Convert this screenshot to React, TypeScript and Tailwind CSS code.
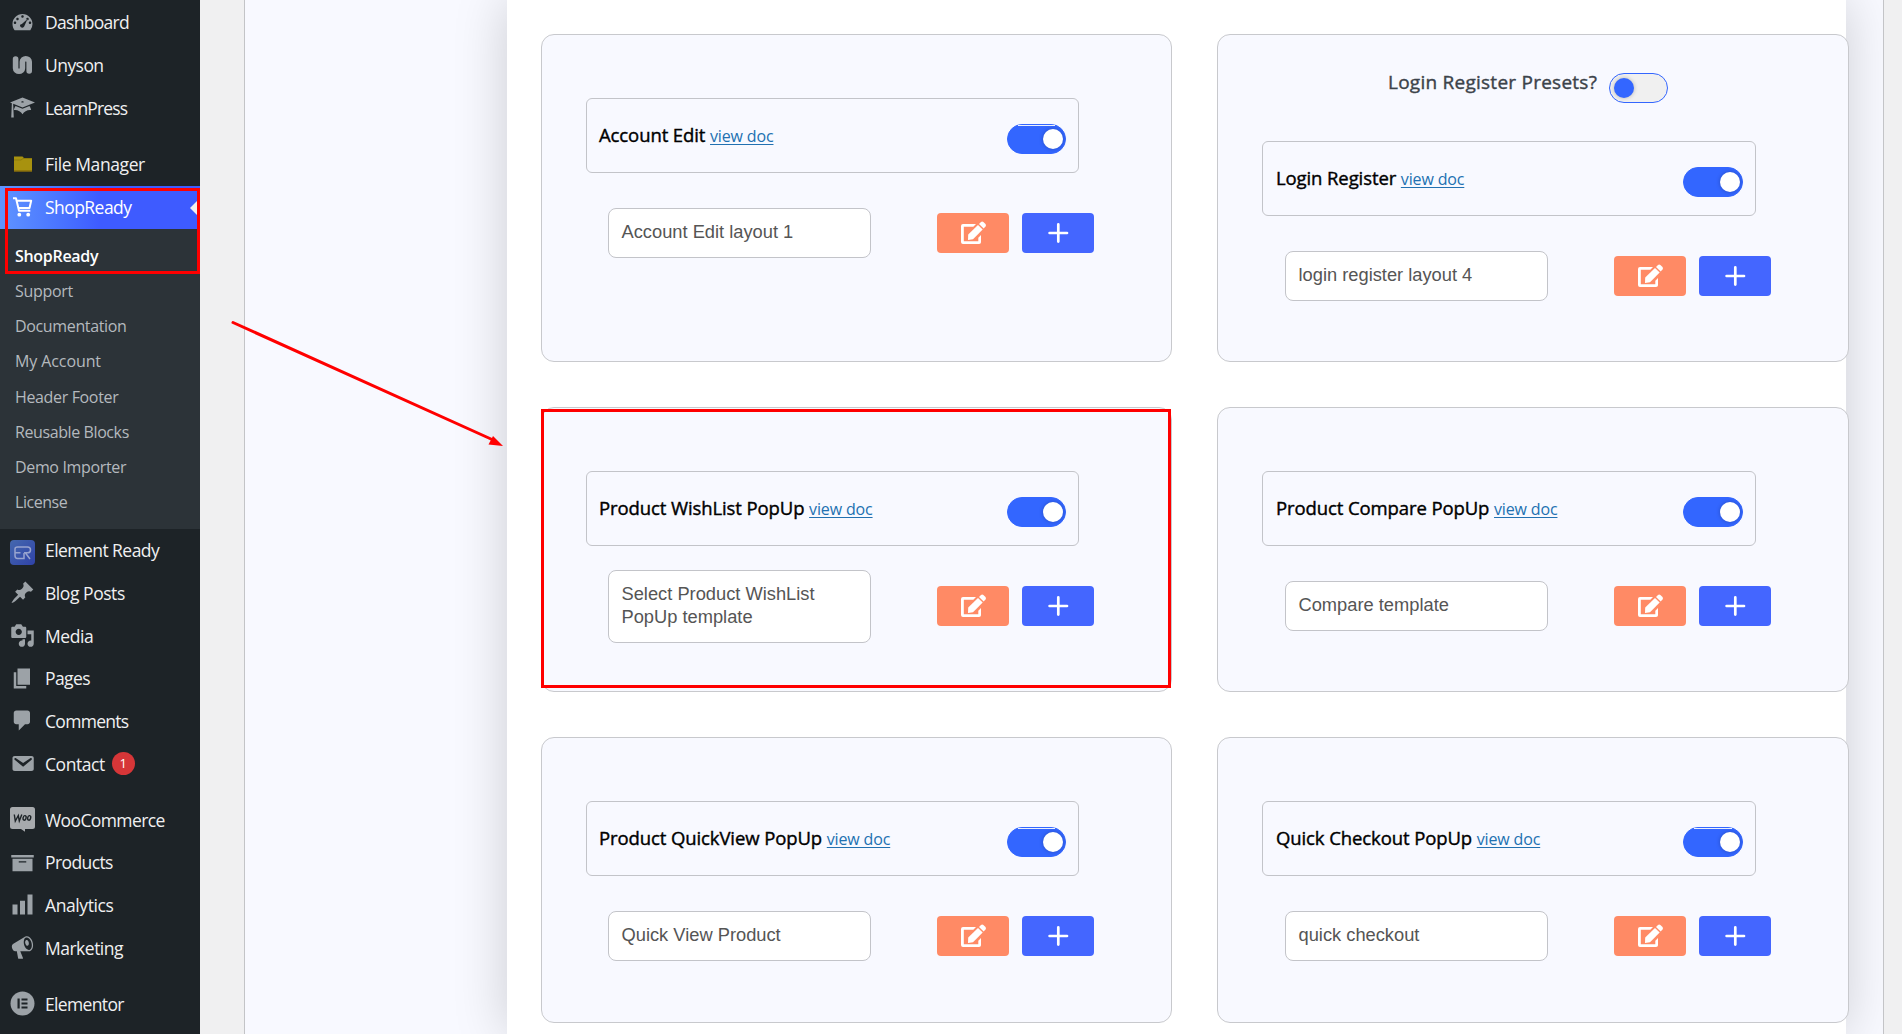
import React from "react";

const menuFont = "font-['Open_Sans',sans-serif]";

type MenuEntry = {
  label: string;
  icon: React.ReactNode;
  tracking: string;
  height: string;
  badge?: number;
};

type SubEntry = { label: string; tracking: string; height: string };

const DashboardIcon = () => (
  <svg width="25" height="25" viewBox="0 0 20 20" fill="currentColor">
    <path d="M3.76 17h12.48A7.95 7.95 0 0 0 18 12c0-4.410-3.580-8-8-8s-8 3.590-8 8c0 1.900.66 3.640 1.760 5zM9 6c0-.55.45-1 1-1s1 .45 1 1-.45 1-1 1-1-.45-1-1zm-4 2c0-.55.45-1 1-1s1 .45 1 1-.45 1-1 1-1-.45-1-1zm4.520 3.920L14 8l-2.390 5.480c-.28.730-.930 1.520-1.610 1.520-1.100 0-2-.9-2-2 0-.61.84-.85 1.520-1.080zM15 11c0-.55.45-1 1-1s1 .45 1 1-.45 1-1 1-1-.45-1-1zM3 11c0-.55.45-1 1-1s1 .45 1 1-.45 1-1 1-1-.45-1-1zm10-3c0-.55.45-1 1-1s1 .45 1 1-.45 1-1 1-1-.45-1-1z" />
  </svg>
);

const UnysonIcon = () => (
  <svg width="25" height="25" viewBox="0 0 25 25" fill="none" stroke="currentColor" strokeWidth="5.6" strokeLinecap="round">
    <path d="M5.600 7V16.200a3.400 3 0 0 0 6.800 0V9.800a3.400 3 0 0 1 6.800 0V19" />
  </svg>
);

const LearnIcon = () => (
  <svg width="25" height="25" viewBox="0 0 20 20" fill="currentColor">
    <path d="M10 10L2.540 7.020 3 18H1l.48-11.410L0 6l10-4 10 4zm0-5c-.55 0-1 .22-1 .5s.45.5 1 .5 1-.22 1-.5-.45-.5-1-.5zm0 6l5.570-2.230c.71.940 1.200 2.070 1.360 3.300-.3-.04-.61-.07-.93-.07-2.550 0-4.780 1.370-6 3.410C8.780 13.370 6.550 12 4 12c-.32 0-.63.030-.93.070.16-1.230.65-2.360 1.360-3.300z" />
  </svg>
);

const FolderIcon = () => (
  <svg width="25" height="25" viewBox="0 0 25 25">
    <path d="M4 5.500h8.500l1.500 1.500h8V20.500H4z" fill="#a8920f" />
    <path d="M4 9h7l2-1.500H22" fill="none" stroke="#8f7c0c" />
    <path d="M4 20H22" stroke="#7a5c0a" />
  </svg>
);

const CartIcon = () => (
  <svg width="25" height="25" viewBox="0 0 25 25" fill="none" stroke="currentColor" strokeWidth="2" strokeLinejoin="round">
    <path d="M3 3.300h3l3 12.500h11.300M6.700 5.800h14.500l-1.700 7.200H8.500" />
    <circle cx="9.300" cy="19.700" r="1.900" fill="currentColor" stroke="none" />
    <circle cx="18.200" cy="19.700" r="1.900" fill="currentColor" stroke="none" />
  </svg>
);

const ElementReadyIcon = () => (
  <svg className="relative top-[3px]" width="25" height="25" viewBox="0 0 25 25" fill="none">
    <defs>
      <linearGradient id="er" x1="0" y1="0" x2="1" y2="1">
        <stop offset="0" stopColor="#4568ae" />
        <stop offset="1" stopColor="#2f42a8" />
      </linearGradient>
    </defs>
    <rect width="25" height="25" rx="4" fill="url(#er)" />
    <path d="M11.500 7H7.500q-2.500 0-2.500 2v6.500q0 3 2.500 3h6.500v-5.500M5 12.700h5.500M11 7h6.500q3 0 3 2.900t-3 2.900h-3.500M15.500 13l4.500 6" stroke="#98a4cf" strokeWidth="1.500" />
  </svg>
);

const PinIcon = () => (
  <svg width="25" height="25" viewBox="0 0 20 20" fill="currentColor">
    <path d="M10.440 3.020l1.820-1.820 6.360 6.350-1.830 1.820c-1.050-.68-2.480-.57-3.410.36l-.75.750c-.92.930-1.040 2.350-.35 3.410l-1.830 1.820-2.410-2.410-2.800 2.790c-.42.420-3.380 2.710-3.800 2.290s1.860-3.390 2.280-3.810l2.790-2.790L4.100 9.360l1.830-1.820c1.050.69 2.480.57 3.400-.36l.75-.75c.93-.92 1.050-2.350.36-3.410z" />
  </svg>
);

const MediaIcon = () => (
  <svg width="25" height="25" viewBox="0 0 20 20" fill="currentColor">
    <path d="M13 11V4c0-.55-.45-1-1-1h-1.670L9 1H5L3.670 3H2c-.55 0-1 .45-1 1v7c0 .55.45 1 1 1h10c.55 0 1-.45 1-1zM7 4.500c1.380 0 2.500 1.120 2.500 2.500S8.380 9.500 7 9.500 4.500 8.380 4.500 7 5.620 4.500 7 4.500zM14 6h5v10.500c0 1.380-1.120 2.500-2.500 2.500S14 17.880 14 16.500s1.120-2.500 2.500-2.500c.17 0 .34.020.5.050V9h-3V6zm-4 8.050V13h2v3.500c0 1.380-1.120 2.500-2.500 2.500S7 17.880 7 16.500 8.120 14 9.500 14c.17 0 .34.020.5.050z" />
  </svg>
);

const PagesIcon = () => (
  <svg width="25" height="25" viewBox="0 0 20 20" fill="currentColor">
    <path d="M6 15V2h10v13H6zm-1 1h8v2H3V5h2v11z" />
  </svg>
);

const CommentIcon = () => (
  <svg width="25" height="25" viewBox="0 0 20 20" fill="currentColor">
    <path d="M5 2h9c1.100 0 2 .9 2 2v7c0 1.100-.9 2-2 2h-2l-5 5v-5H5c-1.100 0-2-.9-2-2V4c0-1.100.9-2 2-2z" />
  </svg>
);

const MailIcon = () => (
  <svg width="25" height="25" viewBox="0 0 20 20" fill="currentColor">
    <path d="M3.870 4h13.250C18.370 4 19 4.590 19 5.790v8.420c0 1.190-.63 1.790-1.880 1.790H3.870c-1.250 0-1.880-.6-1.880-1.790V5.790c0-1.200.63-1.790 1.880-1.790zm6.620 8.600l6.740-5.530c.24-.2.430-.66.130-1.070-.29-.41-.82-.42-1.170-.17l-5.700 3.860L4.800 5.830c-.35-.25-.88-.24-1.170.17-.3.410-.11.870.13 1.070z" />
  </svg>
);

const WooIcon = () => (
  <svg width="25" height="25" viewBox="0 0 25 25">
    <path d="M2.500 0h20Q25 0 25 2.500v17q0 2.500-2.500 2.500H15v2.700L11 22H2.500Q0 22 0 19.500v-17Q0 0 2.500 0z" fill="#a7aaad" />
    <path d="M4.300 7.500l1 6.500 3-5.500 1 5.500 2.500-6.500" fill="none" stroke="#1d2327" strokeWidth="1.400" />
    <ellipse cx="14.600" cy="10.900" rx="1.500" ry="2.300" fill="none" stroke="#1d2327" strokeWidth="1.400" transform="rotate(12 14.600 10.900)" />
    <ellipse cx="19.200" cy="10.900" rx="1.500" ry="2.300" fill="none" stroke="#1d2327" strokeWidth="1.400" transform="rotate(12 19.200 10.900)" />
  </svg>
);

const ArchiveIcon = () => (
  <svg width="25" height="25" viewBox="0 0 20 20" fill="currentColor">
    <path d="M19 4v2H1V4h18zM2 7h16v10H2V7zm11 3V9H7v1h6z" />
  </svg>
);

const ChartIcon = () => (
  <svg width="25" height="25" viewBox="0 0 20 20" fill="currentColor">
    <path d="M18 18V2h-4v16h4zm-6 0V7H8v11h4zm-6 0v-8H2v8h4z" />
  </svg>
);

const MegaphoneIcon = () => (
  <svg width="25" height="25" viewBox="0 0 20 20" fill="currentColor">
    <path d="M18.150 5.940c.46 1.620.38 3.220-.02 4.480-.42 1.280-1.260 2.180-2.300 2.480-.16.060-.26.060-.4.060-.06.020-.12.020-.18.020-.06.020-.14.020-.22.020h-6.800l2.220 5.500c.02.140-.06.260-.14.340-.08.100-.24.160-.34.160H6.950c-.1 0-.26-.06-.34-.16-.08-.08-.16-.2-.14-.34l-1-5.500H4.250l-.02-.02c-.5.060-1.080-.18-1.540-.62s-.88-1.080-1.060-1.880c-.24-.8-.2-1.560-.02-2.200.18-.62.580-1.080 1.060-1.300l.02-.02 9-5.400c.1-.06.180-.1.240-.16.060-.04.140-.08.240-.12.160-.08.280-.12.5-.18 1.040-.3 2.240.1 3.220.98s1.840 2.240 2.260 3.860zm-2.580 5.980h-.02c.4-.1.740-.34 1.040-.7.580-.7.860-1.760.86-3.040 0-.64-.1-1.300-.28-1.980-.34-1.360-1.020-2.500-1.780-3.240s-1.680-1.100-2.460-.88c-.82.220-1.400.96-1.700 2-.32 1.040-.28 2.360.06 3.720.38 1.360 1 2.500 1.800 3.240.78.740 1.620 1.100 2.480.88zm-2.540-7.960c.22-.04.42-.02.62.04.38.160.76.480 1.020 1s.42 1.200.42 1.780c0 .3-.04.560-.12.8-.18.480-.44.840-.86.940-.34.100-.8-.06-1.140-.4s-.64-.86-.78-1.500c-.18-.62-.12-1.240.02-1.720s.48-.84.820-.94z" />
  </svg>
);

const ElementorIcon = () => (
  <svg width="25" height="25" viewBox="0 0 25 25">
    <circle cx="12.500" cy="12.500" r="12" fill="currentColor" />
    <path d="M7.500 7.500h2.200v10H7.500zM11.500 7.500h6v2h-6zM11.500 11.500h6v2h-6zM11.500 15.500h6v2h-6z" fill="#1d2327" />
  </svg>
);

const topMenu: MenuEntry[] = [
  { label: "Dashboard", icon: <DashboardIcon />, tracking: "tracking-[-0.7px]", height: "h-[43px]" },
  { label: "Unyson", icon: <UnysonIcon />, tracking: "tracking-[-0.55px]", height: "h-[43px]" },
  { label: "LearnPress", icon: <LearnIcon />, tracking: "tracking-[-0.85px]", height: "h-[43px]" },
  { label: "File Manager", icon: <FolderIcon />, tracking: "tracking-[-0.4px]", height: "h-[43px] mt-[13px]" },
];

const subMenu: SubEntry[] = [
  { label: "Support", tracking: "tracking-[-0.3px]", height: "h-[35px]" },
  { label: "Documentation", tracking: "tracking-[-0.35px]", height: "h-[35px]" },
  { label: "My Account", tracking: "tracking-[-0.1px]", height: "h-[36px]" },
  { label: "Header Footer", tracking: "tracking-[-0.35px]", height: "h-[35px]" },
  { label: "Reusable Blocks", tracking: "tracking-[-0.4px]", height: "h-[35px]" },
  { label: "Demo Importer", tracking: "tracking-[-0.35px]", height: "h-[35px]" },
  { label: "License", tracking: "tracking-[-0.45px]", height: "h-[35px]" },
];

const bottomMenu: MenuEntry[] = [
  { label: "Element Ready", icon: <ElementReadyIcon />, tracking: "tracking-[-0.55px]", height: "h-[43px]" },
  { label: "Blog Posts", icon: <PinIcon />, tracking: "tracking-[-0.45px]", height: "h-[43px]" },
  { label: "Media", icon: <MediaIcon />, tracking: "tracking-[-0.4px]", height: "h-[43px]" },
  { label: "Pages", icon: <PagesIcon />, tracking: "tracking-[-0.6px]", height: "h-[42px]" },
  { label: "Comments", icon: <CommentIcon />, tracking: "tracking-[-0.7px]", height: "h-[43px]" },
  { label: "Contact", icon: <MailIcon />, tracking: "tracking-[-0.45px]", height: "h-[43px]", badge: 1 },
  { label: "WooCommerce", icon: <WooIcon />, tracking: "tracking-[-0.6px]", height: "h-[43px] mt-[13px]" },
  { label: "Products", icon: <ArchiveIcon />, tracking: "tracking-[-0.6px]", height: "h-[42px]" },
  { label: "Analytics", icon: <ChartIcon />, tracking: "tracking-[-0.4px]", height: "h-[43px]" },
  { label: "Marketing", icon: <MegaphoneIcon />, tracking: "tracking-[-0.5px]", height: "h-[43px]" },
  { label: "Elementor", icon: <ElementorIcon />, tracking: "tracking-[-0.65px]", height: "h-[43px] mt-[13px]" },
];

const MenuItem = ({ label, icon, tracking, height, badge }: MenuEntry) => (
  <li className={`flex items-center ${height}`}>
    <span className="flex w-[45px] pl-[10px] text-[#9ca2a7]">{icon}</span>
    <span className={`text-[17.5px] leading-6 whitespace-nowrap text-[#f0f0f1] ${tracking}`}>{label}</span>
    {badge ? (
      <span className="ml-[7px] flex h-[23px] w-[23px] items-center justify-center rounded-full bg-[#d63638] text-[13px] text-white">
        {badge}
      </span>
    ) : null}
  </li>
);

const Sidebar = () => (
  <nav className={`relative h-[1034px] w-[200px] shrink-0 overflow-hidden bg-[#1d2327] ${menuFont}`}>
    <ul className="pb-[1px]">
      {topMenu.map((item) => (
        <MenuItem key={item.label} {...item} />
      ))}
    </ul>
    <div className="relative flex h-[43px] items-center bg-linear-to-r from-[#6094ff] to-[#3e5bff] to-50%">
      <span className="flex w-[45px] pl-[10px] text-white">
        <CartIcon />
      </span>
      <span className="text-[17.5px] tracking-[-0.55px] text-white">ShopReady</span>
      <span className="absolute right-0 border-y-[10px] border-r-[10px] border-y-transparent border-r-[#f0f0f1]" />
    </div>
    <div className="h-[300px] bg-[#2c3338] pt-[9px] pl-[15px]">
      <p className="flex h-[35px] items-center text-[16px] font-semibold tracking-[-0.3px] text-white">ShopReady</p>
      <ul>
        {subMenu.map((item) => (
          <li
            key={item.label}
            className={`flex items-center text-[16px] text-[#b4b9be] ${item.tracking} ${item.height}`}
          >
            {item.label}
          </li>
        ))}
      </ul>
    </div>
    <ul className="-mt-[1px]">
      {bottomMenu.map((item) => (
        <MenuItem key={item.label} {...item} />
      ))}
    </ul>
    <div className="absolute top-[188px] left-[5px] h-[86px] w-[195px] border-[3px] border-[#ff0000]" />
  </nav>
);

const Toggle = ({ on, seam }: { on: boolean; seam?: boolean }) => (
  <button
    className={`relative flex h-[30px] w-[59px] shrink-0 items-center rounded-full border border-[#3366ff] ${
      on ? "justify-end bg-[#3366ff] pr-[2px] group-even:w-[60px]" : "justify-start bg-[#f0f0f0] pl-[4px]"
    }`}
  >
    {seam ? <span className="absolute top-0 right-[10px] left-[10px] h-px bg-white/90" /> : null}
    <span
      className={`h-5 w-5 rounded-full shadow-[0_0_4px_rgba(0,0,0,0.25)] ${on ? "bg-white" : "bg-[#3366ff]"}`}
    />
  </button>
);

const EditIcon = () => (
  <svg className="relative left-[1px]" width="26" height="24" viewBox="0 0 26 24" fill="white">
    <path d="M2 3h13l-2.700 2.700H2.800V20.300h14.500v-3.600L20 14v7.300Q20 23 18 23H2Q0 23 0 21V5Q0 3 2 3z" />
    <path d="M7.200 13.500L17 3.900 21.700 8.600 12 18.200 7 19z" />
    <path d="M18 2.900L20 1q1.200-1 2.400 0L24.500 3.100q1 1.200 0 2.400L22.700 7.500z" />
  </svg>
);

type TemplateCardProps = {
  title: string;
  template: string;
  height: string;
  preset?: string;
  tall?: boolean;
  seam?: boolean;
};

const TemplateCard = ({ title, template, height, preset, tall, seam }: TemplateCardProps) => (
  <section className={`group rounded-[13px] border border-[#c8c9cd] bg-[#f8f9ff] pl-11 ${height}`}>
    {preset ? (
      <div className="flex h-[106px] pt-[38px] pl-[126px]">
        <h4 className={`mt-[-5px] w-[221px] text-[19px] font-medium whitespace-nowrap text-[#3c434a] tracking-[0.25px] [-webkit-text-stroke:0.4px] ${menuFont}`}>
          {preset}
        </h4>
        <Toggle on={false} />
      </div>
    ) : (
      <div className="h-[63px]" />
    )}
    <header className="flex h-[75px] w-[493px] items-start justify-between rounded-[6px] border border-[#c3c4c9] pr-[12px] pl-[12px] group-even:w-[494px] group-even:pl-[13px]">
      <h3 className={`mt-[22px] text-[18.5px] font-medium tracking-[-0.1px] whitespace-nowrap text-black [-webkit-text-stroke:0.4px] ${menuFont}`}>
        {title}{" "}
        <a href="#" className="text-[16px] font-normal tracking-[-0.15px] text-[#2271b1] underline underline-offset-2 [-webkit-text-stroke:0]">
          view doc
        </a>
      </h3>
      <div className="mt-[25px]">
        <Toggle on seam={seam} />
      </div>
    </header>
    <div className={`flex pl-[22px] group-even:pl-[23px] ${tall ? "mt-6" : "mt-[35px]"}`}>
      <div
        className={`w-[263px] rounded-[8px] border border-[#c3c4c9] bg-white pt-[11px] pl-[12.5px] font-['Liberation_Sans',sans-serif] text-[18.3px] leading-[23px] text-[#555] ${
          tall ? "h-[73px]" : "h-[50px]"
        }`}
      >
        {template}
      </div>
      <div className={`ml-[66px] flex gap-[13px] ${tall ? "mt-4" : "mt-[5px]"}`}>
        <button className="flex h-10 w-[72px] items-center justify-center rounded-[4px] bg-[#ff8a65]">
          <EditIcon />
        </button>
        <button className="flex h-10 w-[72px] items-center justify-center rounded-[4px] bg-[#4466ff]">
          <svg width="22" height="22" viewBox="0 0 22 22" stroke="white" strokeWidth="2.700" strokeLinecap="round">
            <path d="M11.300 2.400v17.200M2.600 11h17.400" />
          </svg>
        </button>
      </div>
    </div>
  </section>
);

const cards: TemplateCardProps[] = [
  { title: "Account Edit", template: "Account Edit layout 1", height: "h-[328px]", seam: true },
  { title: "Login Register", template: "login register layout 4", height: "h-[328px]", preset: "Login Register Presets?" },
  { title: "Product WishList PopUp", template: "Select Product WishList PopUp template", height: "h-[285px]", tall: true },
  { title: "Product Compare PopUp", template: "Compare template", height: "h-[285px]" },
  { title: "Product QuickView PopUp", template: "Quick View Product", height: "h-[286px]", seam: true },
  { title: "Quick Checkout PopUp", template: "quick checkout", height: "h-[286px]", seam: true },
];

const App = () => (
  <div className="relative flex h-[1034px] w-[1902px] overflow-hidden bg-[#f0f0f1]">
    <Sidebar />
    <main className="ml-11 flex w-[1640px] overflow-hidden border-x border-[#c3c4c7] bg-[#f8f9ff] pl-[262px]">
      <div className="h-[1034px] w-[1339px] shrink-0 bg-white pt-[34px] pl-[34px] shadow-[0_0_50px_rgba(0,0,0,0.18)]">
        <div className="grid w-[1308px] grid-cols-[631px_632px] gap-[45px]">
          {cards.map((card) => (
            <TemplateCard key={card.title} {...card} />
          ))}
        </div>
      </div>
    </main>
    <div className="absolute top-[409px] left-[541px] h-[279px] w-[630px] border-[3px] border-[#ff0000]" />
    <svg className="absolute top-[315px] left-[225px]" width="285" height="140" fill="#ff0000">
      <path d="M8 7.500L266 124" stroke="#ff0000" strokeWidth="3" strokeLinecap="round" />
      <path d="M278 131l-14.500-1.500 4.500-8.500z" />
    </svg>
  </div>
);

export default App;
